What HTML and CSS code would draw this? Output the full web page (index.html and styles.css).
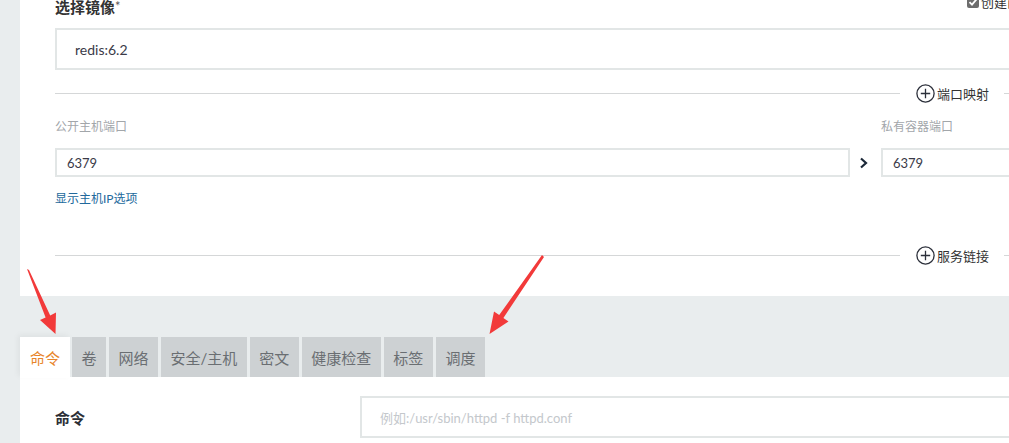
FILE: index.html
```html
<!DOCTYPE html>
<html lang="zh-CN">
<head>
<meta charset="utf-8">
<title>选择镜像</title>
<link rel="stylesheet" href="styles.css">
</head>
<body>
<div class="page">
  <section class="panel">
    <div class="head-row">
      <span class="head-label">选择镜像<span class="req">*</span></span>
      <label class="pull">
        <span class="checkbox"><svg width="12" height="12" viewBox="0 0 12 12"><polyline points="2.5,6.2 5,8.6 9.6,3.2" fill="none" stroke="#fff" stroke-width="1.8"/></svg></span>
        <span class="pull-text">创建前总是拉取镜像</span>
      </label>
    </div>
    <div class="field big">redis:6.2</div>

    <div class="divider">
      <span class="line grow"></span>
      <span class="divider-label">
        <svg class="plus" width="19" height="19" viewBox="0 0 19 19"><circle cx="9.5" cy="9.5" r="8.6" fill="none" stroke="#2b2f3a" stroke-width="1.3"/><path d="M9.5 4.8v9.4M4.8 9.5h9.4" stroke="#2b2f3a" stroke-width="1.3"/></svg>
        端口映射
      </span>
      <span class="line tail"></span>
    </div>

    <div class="ports">
      <span class="sub-label">公开主机端口</span>
      <span></span>
      <span class="sub-label">私有容器端口</span>
      <div class="field small">6379</div>
      <span class="chev"><svg width="10" height="12" viewBox="0 0 10 12"><polyline points="2,1.5 7,6 2,10.5" fill="none" stroke="#1b2838" stroke-width="2.2"/></svg></span>
      <div class="field small">6379</div>
    </div>
    <a class="link">显示主机IP选项</a>

    <div class="divider second">
      <span class="line grow"></span>
      <span class="divider-label">
        <svg class="plus" width="19" height="19" viewBox="0 0 19 19"><circle cx="9.5" cy="9.5" r="8.6" fill="none" stroke="#2b2f3a" stroke-width="1.3"/><path d="M9.5 4.8v9.4M4.8 9.5h9.4" stroke="#2b2f3a" stroke-width="1.3"/></svg>
        服务链接
      </span>
      <span class="line tail"></span>
    </div>
  </section>

  <nav class="tabs">
    <span class="tab active">命令</span>
    <span class="tab">卷</span>
    <span class="tab">网络</span>
    <span class="tab">安全/主机</span>
    <span class="tab">密文</span>
    <span class="tab">健康检查</span>
    <span class="tab">标签</span>
    <span class="tab">调度</span>
  </nav>

  <section class="tab-body">
    <div class="form-row">
      <span class="row-label">命令</span>
      <div class="field big placeholder">例如:/usr/sbin/httpd -f httpd.conf</div>
    </div>
  </section>
</div>

<svg class="annot" width="1009" height="443" viewBox="0 0 1009 443">
  <polygon points="27,269 29,270 50.2,315.4 56,312.6 55.5,334 40,320 45.6,317.4" fill="#f23a3a"/>
  <polygon points="542,255 544,257 503.4,317.9 508.5,321.5 489.5,334 494,311.5 499.2,315.1" fill="#f23a3a"/>
</svg>
</body>
</html>
```
FILE: styles.css
```css
html, body {
  margin: 0;
  padding: 0;
  overflow: hidden;
}
body {
  background: #e9edee;
  font-family: Lato, "Noto Sans CJK SC", sans-serif;
  color: #333;
  width: 1009px;
  height: 443px;
  position: relative;
}
.page {
  width: 1098px;
  padding-left: 20px;
}
.panel {
  background: #fff;
  padding: 0 20px 31px 35px;
  margin-top: -4px;
}
.head-row {
  display: flex;
  align-items: center;
  height: 20px;
  margin-bottom: 12px;
}
.head-label {
  font-size: 15px;
  font-weight: bold;
  color: #333;
}
.req {
  font-weight: normal;
  font-size: 13px;
  vertical-align: 2px;
  color: #555;
}
.pull {
  margin-left: auto;
  display: flex;
  align-items: center;
  gap: 2px;
  font-size: 13px;
  color: #333;
  margin-top: -9px;
}
.checkbox {
  width: 12px;
  height: 12px;
  border-radius: 2px;
  background: #6d6d6d;
  display: flex;
}
.field {
  box-sizing: border-box;
  border: 2px solid #e2e6e6;
  background: #fff;
  display: flex;
  align-items: center;
  color: #3a3a48;
}
.field.big {
  height: 42px;
  padding-left: 18px;
  font-size: 14px;
}
.field.small {
  height: 29px;
  padding-left: 10px;
  font-size: 13px;
}
.divider {
  display: flex;
  align-items: center;
  height: 19px;
  margin-top: 14px;
}
.divider.second {
  margin-top: 39px;
}
.line {
  height: 1px;
  background: #d5d7d8;
}
.line.grow {
  flex: 1;
}
.line.tail {
  width: 94px;
}
.divider-label {
  display: flex;
  align-items: center;
  gap: 2px;
  margin: 0 15px 0 16px;
  font-size: 13px;
  color: #333;
}
.ports {
  display: grid;
  grid-template-columns: 1fr 31px 217px;
  row-gap: 13px;
  align-items: center;
  margin-top: 16px;
}
.sub-label {
  font-size: 12px;
  line-height: 16px;
  color: #a2a6aa;
}
.chev {
  display: flex;
  justify-content: center;
  padding-right: 3px;
}
.link {
  display: block;
  margin-top: 14px;
  font-size: 12px;
  line-height: 16px;
  color: #22699c;
}
.tabs {
  display: flex;
  gap: 3px;
  padding-top: 41px;
}
.tab {
  height: 40px;
  display: flex;
  align-items: center;
  padding: 0 9.5px;
  background: #cdd1d3;
  color: #6a6e72;
  font-size: 15px;
}
.tab.active {
  height: 41px;
  padding: 0 10px;
  background: #fff;
  color: #e8852b;
  margin-right: -1px;
  box-shadow: -2px -2px 6px rgba(0, 0, 0, 0.05);
}
.tab-body {
  background: #fff;
  padding: 19px 20px 40px 35px;
  margin-top: -1px;
}
.form-row {
  display: grid;
  grid-template-columns: 305px 1fr;
  align-items: center;
}
.row-label {
  font-size: 15px;
  font-weight: bold;
  color: #2b2f36;
}
.field.placeholder {
  font-size: 13px;
  color: #c4c8cc;
}
.annot {
  position: absolute;
  left: 0;
  top: 0;
  pointer-events: none;
}
```
